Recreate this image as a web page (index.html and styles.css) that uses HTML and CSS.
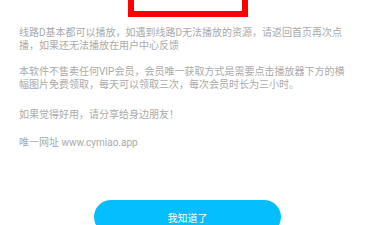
FILE: index.html
```html
<!DOCTYPE html>
<html lang="zh-CN">
<head>
    <meta charset="UTF-8">
    <meta name="viewport" content="width=device-width, initial-scale=1.0">
    <title>使用说明</title>
    <link rel="stylesheet" href="styles.css">
</head>
<body>
    <div class="dialog">
        <div class="poster"></div>

        <div class="notice">
            <p class="notice-line notice-first">线路D基本都可以播放，如遇到线路D无法播放的资源，请返回首页再次点播，如果还无法播放在用户中心反馈</p>
            <p class="notice-line notice-vip">本软件不售卖任何VIP会员，会员唯一获取方式是需要点击播放器下方的横幅图片免费领取，每天可以领取三次，每次会员时长为三小时。</p>
            <p class="notice-line">如果觉得好用，请分享给身边朋友！</p>
            <p class="notice-line">唯一网址 www.cymiao.app</p>
        </div>

        <div class="actions">
            <button class="btn btn-primary" type="button">我知道了</button>
        </div>
    </div>
</body>
</html>
```

FILE: styles.css
```css
:root {
    --text-muted: #aaaaaa;
    --accent: #05befe;
    --alert: #ff0000;
}

body {
    margin: 0;
    background: #ffffff;
    font-family: Roboto, "Noto Sans CJK SC", sans-serif;
    overflow: hidden;
}

.dialog {
    width: 375px;
}

/* top of the banner is scrolled out of view */
.poster {
    width: 108px;
    height: 150px;
    margin: -145px auto 0;
    border: 6px solid var(--alert);
}

.notice {
    margin-top: 9px;
    padding: 0 24px 0 19px;
}

.notice-line {
    margin: 0 0 15px 0;
    font-size: 10px;
    line-height: 13.4px;
    color: var(--text-muted);
}

.notice-first {
    margin-bottom: 12px;
}

.notice-vip {
    margin-bottom: 16px;
}

.actions {
    margin-top: 51px;
    display: flex;
    justify-content: center;
}

.btn {
    width: 187px;
    height: 34px;
    border: none;
    border-radius: 17px;
    font-family: inherit;
    font-size: 10px;
    cursor: pointer;
}

.btn-primary {
    background-color: var(--accent);
    color: #ffffff;
}
```
